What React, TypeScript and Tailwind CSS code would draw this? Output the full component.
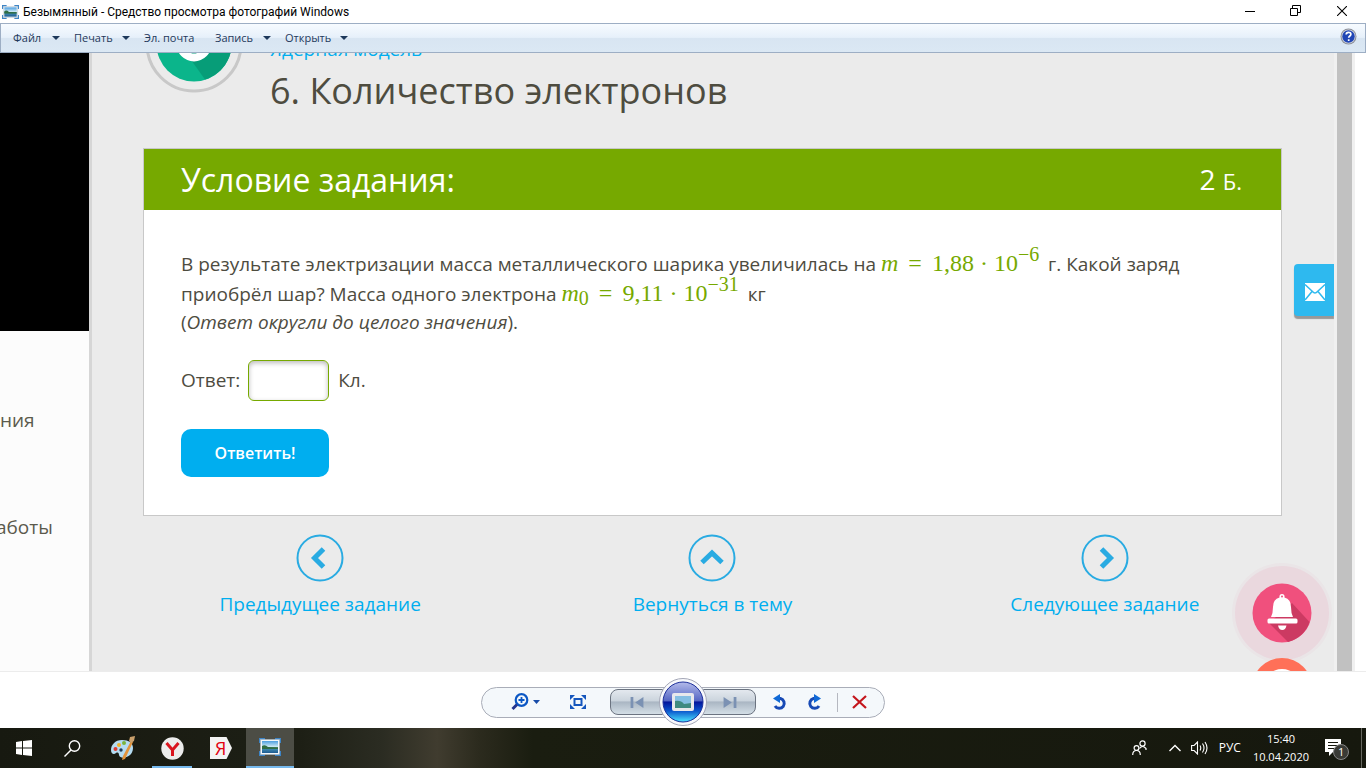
import React, { useState } from "react";

const MENU = [
  { label: "Файл", arrow: true, width: "w-[61px]" },
  { label: "Печать", arrow: true, width: "w-[70px]" },
  { label: "Эл. почта", arrow: false, width: "w-[71px]" },
  { label: "Запись", arrow: true, width: "w-[70px]" },
  { label: "Открыть", arrow: true, width: "w-[77px]" },
];

const NAV = [
  { label: "Предыдущее задание", d: "M27.5 15 L18.5 24 L27.5 33" },
  { label: "Вернуться в тему", d: "M14 28.5 L24 19 L34 28.5" },
  { label: "Следующее задание", d: "M20.5 15 L29.5 24 L20.5 33" },
];

function PhotoIcon({ className }: { className: string }) {
  return (
    <svg className={className} viewBox="0 0 22 20" aria-hidden="true">
      <defs>
        <linearGradient id="sky" x1="0" y1="0" x2="0" y2="1">
          <stop offset="0" stopColor="#4d9fe0" />
          <stop offset="0.5" stopColor="#d3ecf5" />
          <stop offset="0.55" stopColor="#3d7a5c" />
          <stop offset="0.7" stopColor="#3a83ac" />
          <stop offset="1" stopColor="#1d5b92" />
        </linearGradient>
      </defs>
      <path d="M0 1h6v5H0zM16 1h6v5h-6zM0 14h6v5H0zM16 14h6v5h-6z" fill="#3c84c6" />
      <rect x="1.5" y="2.5" width="19" height="15" fill="#f4f7f9" stroke="#a9b8c4" strokeWidth="0.6" />
      <rect x="3" y="4" width="16" height="12" fill="url(#sky)" />
      <path d="M3 9q3-2 6 1l10 .5v1.500H3z" fill="#2f6d45" />
    </svg>
  );
}

function TitleBar() {
  return (
    <header className="flex h-[23px] shrink-0 items-center bg-white pl-[2px]">
      <PhotoIcon className="h-4 w-[17px]" />
      <h1 className="ml-1 flex-1 font-['Roboto','Open_Sans',sans-serif] text-xs leading-[22px] text-black">
        Безымянный - Средство просмотра фотографий Windows
      </h1>
      <button type="button" aria-label="Свернуть" className="flex h-full w-[46px] items-center justify-center">
        <svg width="10" height="10" viewBox="0 0 10 10"><path d="M0 4.500h10" stroke="#000" /></svg>
      </button>
      <button type="button" aria-label="Восстановить" className="flex h-full w-11 items-center justify-center pb-[2px]">
        <svg width="11" height="11" viewBox="0 0 11 11" fill="none" stroke="#000">
          <path d="M.5 3.500h7v7h-7zM2.500 3V.5h8v7H8" />
        </svg>
      </button>
      <button type="button" aria-label="Закрыть" className="flex h-full w-[49px] items-center justify-center pb-[2px]">
        <svg width="10" height="10" viewBox="0 0 10 10"><path d="M0 0l10 10M10 0L0 10" stroke="#000" strokeWidth="1.100" /></svg>
      </button>
    </header>
  );
}

function MenuBar() {
  return (
    <nav className="flex h-[30px] shrink-0 items-center border border-[#9daec4] bg-[linear-gradient(#f7fbff_0%,#e6f0fa_48%,#d8e5f2_50%,#dbe8f4_100%)] pl-3 text-[11px] text-[#1e395b]">
      {MENU.map((m) => (
        <button
          key={m.label}
          type="button"
          className={`flex shrink-0 items-center justify-between whitespace-nowrap pr-[14px] ${m.width}`}
        >
          {m.label}
          {m.arrow && (
            <svg className="w-2 shrink-0" height="4" viewBox="0 0 8 4"><path d="M0 0h8L4 4z" fill="#1e395b" /></svg>
          )}
        </button>
      ))}
      <button type="button" aria-label="Справка" className="mb-1 ml-auto mr-2">
        <svg width="17" height="17" viewBox="0 0 17 17">
          <circle cx="8.500" cy="8.500" r="8" fill="#8c8f98" />
          <circle cx="8.500" cy="8.500" r="7" fill="#d5d8e2" />
          <circle cx="8.500" cy="8.500" r="6.200" fill="#2146b5" />
          <path d="M6.200 6.600c0-3 4.700-3 4.700-.3 0 1.700-2.200 1.700-2.200 3.500M8.700 11.300v1.700" fill="none" stroke="#fff" strokeWidth="1.700" />
        </svg>
      </button>
    </nav>
  );
}

function TopicBadge() {
  return (
    <svg className="h-[98px] w-[98px] shrink-0" viewBox="0 0 98 98" aria-hidden="true">
      <circle cx="49" cy="49" r="47" fill="none" stroke="#c8c8c8" strokeWidth="3" />
      <circle cx="49" cy="49" r="37.500" fill="#0bb58b" />
      <path d="M44 62L60 84.500A37.500 37.500 0 0 0 86 56L62 36z" fill="#079d78" />
      <circle cx="49" cy="49" r="13.500" fill="none" stroke="#fff" strokeWidth="8" />
    </svg>
  );
}

function Formula({ children }: { children: React.ReactNode }) {
  return (
    <span className="mr-1 whitespace-nowrap font-['Liberation_Serif',serif] text-2xl leading-none text-[#76a900]">
      {children}
    </span>
  );
}

function Sup({ children }: { children: string }) {
  return <span className="relative -top-[10px] text-xl leading-none">{children}</span>;
}

const Eq = () => <span className="mx-[10px]">=</span>;
const Dot = () => <span className="mx-[6px]">·</span>;

function TaskCard() {
  const [answer, setAnswer] = useState("");

  return (
    <section className="border border-[#c8c8c8] bg-white">
      <div className="flex h-[61px] items-center justify-between bg-[#76a900] pl-[37px] pr-[39px] text-white">
        <h3 className="text-[32px] leading-[60px]">Условие задания:</h3>
        <span className="text-[28px] leading-[58px]">2 <span className="text-[22px]">Б.</span></span>
      </div>
      <form
        className="px-[37px] pb-[38px] pt-[39px] text-[19px] text-[#4e4c3f]"
        onSubmit={(e) => e.preventDefault()}
      >
        <p className="leading-[30px]">
          В результате электризации масса металлического шарика увеличилась на{" "}
          <Formula><i>m</i><Eq />1,88<Dot />10<Sup>−6</Sup></Formula> г. Какой заряд
          приобрёл шар? Масса одного электрона{" "}
          <Formula>
            <i>m</i><span className="relative top-1 text-xl leading-none">0</span><Eq />9,11<Dot />10<Sup>−31</Sup>
          </Formula>{" "}
          кг
        </p>
        <p className="leading-[26px]">(<i>Ответ округли до целого значения</i>).</p>
        <div className="mt-[25px] flex items-center">
          <label htmlFor="answer">Ответ:</label>
          <input
            id="answer"
            value={answer}
            onChange={(e) => setAnswer(e.target.value)}
            className="ml-2 mr-[9px] h-[41px] w-[81px] rounded-md border border-[#76a900] bg-white px-2 shadow-[inset_0_2px_5px_#bbb] outline-none"
          />
          <span>Кл.</span>
        </div>
        <button type="submit" className="mt-7 h-12 w-[148px] rounded-[10px] bg-[#00aeef] text-base font-semibold text-white">
          Ответить!
        </button>
      </form>
    </section>
  );
}

function TaskPage() {
  return (
    <main className="relative flex min-w-0 flex-1 flex-col overflow-hidden bg-[#ebebeb] pl-[51px] pr-[52px]">
      {/* the page is scrolled, so its heading starts above the visible area */}
      <div className="-mt-[58px] flex gap-[27px] pl-[2px]">
        <TopicBadge />
        <div className="pt-[41px] text-[#4e4c3f]">
          <a href="#topic" className="block text-[19px] leading-[26px] text-[#00aeef]">Ядерная модель</a>
          <h2 className="pt-[5px] text-[36px] leading-[48px]">6. Количество электронов</h2>
        </div>
      </div>
      <div className="mt-[33px]"><TaskCard /></div>
      <nav className="-mx-[19px] mt-[18px] grid grid-cols-3">
        {NAV.map((n) => (
          <a key={n.label} href="#task" className="flex flex-col items-center text-[19px] text-[#00aeef]">
            <svg width="48" height="48" viewBox="0 0 48 48" fill="none" stroke="#29abe2">
              <circle cx="24" cy="24" r="22.500" strokeWidth="2" />
              <path d={n.d} strokeWidth="5" />
            </svg>
            <span className="mt-2 leading-7">{n.label}</span>
          </a>
        ))}
      </nav>

      {/* floating buttons over the page */}
      <button
        type="button"
        aria-label="Написать"
        className="absolute right-0 top-[211px] flex h-[52px] w-10 items-center justify-center rounded-l bg-[#2eb9ef] pl-[2px] pt-1 shadow-[0_3px_1px_#999]"
      >
        <svg width="20" height="18" viewBox="0 0 20 18">
          <path d="M0 0h20v18H0z" fill="#fff" />
          <path d="M0 1.500l7.500 7Q10 11.500 12.500 8.500L20 1.500M0 17l7-8.500M20 17l-7-8.500" fill="none" stroke="#2eb9ef" strokeWidth="1.500" />
        </svg>
      </button>
      <button type="button" aria-label="Уведомления" className="absolute bottom-0 right-[2px] h-[108px]">
        <svg width="100" height="108" viewBox="0 0 100 108">
          <circle cx="50" cy="50" r="50" fill="#ec407a" opacity=".03" />
          <circle cx="50" cy="50" r="47" fill="#ec407a" opacity=".08" />
          <circle cx="50" cy="125" r="30" fill="#ff7058" />
          <circle cx="50" cy="125" r="19" fill="#fff" />
          <circle cx="50" cy="50" r="29.500" fill="#f0507d" />
          <path d="M60 40L77.500 59A29.500 29.500 0 0 1 56 79L37 60z" fill="#cc3a62" />
          <path d="M39 54Q41 50 41 44 41 36 47.500 34.500 47 31 50 31T52.500 34.500Q59 36 59 44 59 50 61 54z" fill="#fff" />
          <rect x="35.500" y="55.500" width="30" height="5" rx="1.500" fill="#fff" />
          <path d="M46 62.500h8.500q-1 4.500-4.200 4.500T46 62.500z" fill="#fff" />
          <circle cx="50" cy="33.500" r="1" fill="#f0507d" />
        </svg>
      </button>
    </main>
  );
}

function Viewer() {
  return (
    <div className="flex min-h-0 flex-1 overflow-hidden pr-[11px]">
      <aside className="w-[92px] shrink-0 overflow-hidden border-r-[3px] border-[#d6d6d6] bg-[#fcfcfc] text-[19px] text-[#5b5a4c]">
        <div className="h-[278px] bg-black" />
        <p className="mt-[75px] leading-7">ния</p>
        <p className="-ml-1 mt-[79px] leading-7">аботы</p>
      </aside>
      <TaskPage />
      <div className="w-[21px] shrink-0 border-x-[3px] border-[#f0f0f0] bg-[#c1c1c1]" />
    </div>
  );
}

function Controls() {
  return (
    <footer className="flex h-[57px] shrink-0 items-center justify-center border-t border-[#ececec] bg-white pt-1">
      <div className="flex h-[31px] w-[404px] items-center rounded-full border border-[#a9adb8] bg-[#f4f8fb] pl-[29px]">
        <button type="button" aria-label="Масштаб" className="flex w-[30px] items-center gap-1">
          <svg width="18" height="18" viewBox="0 0 18 18" fill="none" stroke="#0b57c4">
            <circle cx="10.500" cy="7" r="5.800" strokeWidth="2.200" />
            <path d="M7.500 7h6M10.500 4v6" strokeWidth="1.800" />
            <path d="M6 11.500L1.500 16" stroke="#23348f" strokeWidth="3" />
          </svg>
          <svg width="7" height="4" viewBox="0 0 7 4"><path d="M0 0h7L3.500 4z" fill="#174ba8" /></svg>
        </button>
        <button type="button" aria-label="По размеру окна" className="ml-[29px]">
          <svg width="16" height="14" viewBox="0 0 16 14">
            <path d="M0 0h5L0 5zM16 0h-5l5 5zM0 14h5L0 9zM16 14h-5l5-5z" fill="#1556bd" />
            <rect x="4.500" y="4" width="7" height="6" fill="none" stroke="#1556bd" strokeWidth="2" />
          </svg>
        </button>
        <div className="ml-6 flex items-center">
          <button type="button" aria-label="Назад" className="flex h-[26px] w-[53px] items-center justify-center rounded-l-lg border border-[#6b7380] bg-[linear-gradient(#e3e8ee_0%,#cbd4dd_45%,#aab6c3_50%,#d3dee6_100%)]">
            <svg width="14" height="11" viewBox="0 0 14 12"><path d="M0 0h3v12H0zM14 0v12L5 6z" fill="#7b91b3" /></svg>
          </button>
          <button type="button" aria-label="Показ слайдов" className="relative -mx-1 h-12 w-12">
            <svg width="48" height="48" viewBox="0 0 48 48">
              <defs>
                <linearGradient id="orb" x1="0" y1="0" x2="0" y2="1">
                  <stop offset="0" stopColor="#b4bbea" />
                  <stop offset="0.470" stopColor="#5566c4" />
                  <stop offset="0.500" stopColor="#04159c" />
                  <stop offset="0.720" stopColor="#0a55cc" />
                  <stop offset="1" stopColor="#4ce6ff" />
                </linearGradient>
              </defs>
              <circle cx="24" cy="24" r="23.500" fill="#f8f9fc" stroke="#a3a6b6" />
              <circle cx="24" cy="24" r="20" fill="url(#orb)" stroke="#1d2f9b" />
              <rect x="13" y="15" width="22" height="18" rx="2" fill="#e8e8ec" />
              <rect x="16" y="18" width="16" height="12" fill="#86bfe3" />
              <path d="M16 23q6-1 9 3l7-1v5H16z" fill="#3f8a80" />
            </svg>
          </button>
          <button type="button" aria-label="Вперёд" className="flex h-[26px] w-[53px] items-center justify-center rounded-r-lg border border-[#6b7380] bg-[linear-gradient(#e3e8ee_0%,#cbd4dd_45%,#aab6c3_50%,#d3dee6_100%)]">
            <svg width="14" height="11" viewBox="0 0 14 12"><path d="M11 0h3v12h-3zM0 0v12l9-6z" fill="#7b91b3" /></svg>
          </button>
        </div>
        <button type="button" aria-label="Повернуть влево" className="ml-[17px]">
          <svg width="15" height="17" viewBox="0 0 15 17">
            <path d="M5 4.500H7.500a5 5 0 1 1-5.500 7.500" fill="none" stroke="#184ab5" strokeWidth="3" />
            <path d="M0 4.500L7 0v9z" fill="#0f69d6" />
          </svg>
        </button>
        <button type="button" aria-label="Повернуть вправо" className="ml-[18px]">
          <svg width="15" height="17" viewBox="0 0 15 17">
            <path d="M10 4.500H7.500a5 5 0 1 0 5.500 7.500" fill="none" stroke="#184ab5" strokeWidth="3" />
            <path d="M15 4.500L8 0v9z" fill="#0f69d6" />
          </svg>
        </button>
        <span className="ml-4 h-[19px] w-px bg-[#b5b8c0]" />
        <button type="button" aria-label="Удалить" className="ml-[14px]">
          <svg width="15" height="14" viewBox="0 0 15 14"><path d="M1 1l13 12M14 1L1 13" stroke="#c4161c" strokeWidth="2.200" /></svg>
        </button>
      </div>
    </footer>
  );
}

function Taskbar() {
  return (
    <div className="flex h-10 shrink-0 items-stretch bg-[linear-gradient(90deg,#171910_0%,#1d1f15_22%,#2b2c22_28%,#403c2f_32%,#2c2b1e_35%,#1a1d10_39%,#16180e_100%)] text-xs text-white">
      <button type="button" aria-label="Пуск" className="flex w-12 items-center justify-center">
        <svg width="16" height="16" viewBox="0 0 16 16" fill="#fff"><path d="M0 2l6-1v6.500H0zM7 1l9-1v7.500H7zM0 8.500h6V15l-6-1zM7 8.500h9V16l-9-1z" /></svg>
      </button>
      <button type="button" aria-label="Поиск" className="flex w-12 items-center justify-center">
        <svg width="17" height="17" viewBox="0 0 17 17" fill="none" stroke="#fff" strokeWidth="1.400"><circle cx="10.500" cy="6" r="5.200" /><path d="M7 10L.5 16.500" /></svg>
      </button>
      <button type="button" aria-label="Paint" className="flex w-[52px] items-center justify-center pl-[2px]">
        <svg width="24" height="24" viewBox="0 0 24 24">
          <path d="M11 4C4 4 0 9 0 14c0 4 3 5 5 3 2-1 3 0 3 2 1 5 14 3 14-7 0-5-4-8-11-8z" fill="#b5dcf1" />
          <circle cx="4.500" cy="13" r="2" fill="#df3b2f" />
          <circle cx="8" cy="9" r="2" fill="#f1b42d" />
          <circle cx="13" cy="7" r="2" fill="#7ab53c" />
          <circle cx="10" cy="14" r="1.700" fill="#1f3a55" />
          <path d="M20 5l2 1-8 17-3 1 1-4z" fill="#e2943c" />
          <path d="M19 1l5-1-1 5-3 2-2-2z" fill="#c9a06c" />
        </svg>
      </button>
      <button type="button" aria-label="Яндекс.Браузер" className="ml-1 flex w-10 items-center justify-center border-b-2 border-[#76b9ed] pt-[2px]">
        <svg width="23" height="23" viewBox="0 0 23 23"><circle cx="11.500" cy="11.500" r="11.200" fill="#ececec" /><path d="M5.500 6l6 7 6-7M11.500 12v7" fill="none" stroke="#d9141e" strokeWidth="3" /></svg>
      </button>
      <button type="button" aria-label="Яндекс" className="ml-1 flex w-[50px] items-center justify-center">
        <span className="flex h-[22px] w-[22px] items-center bg-[#f3f3f3] pl-[5px] text-lg leading-none text-[#e3000f] [clip-path:polygon(0_0,75%_0,100%_50%,75%_100%,0_100%)]">Я</span>
      </button>
      <button type="button" aria-label="Средство просмотра фотографий" className="flex w-12 items-center justify-center border-b-2 border-[#76b9ed] bg-[#4c4d45]">
        <PhotoIcon className="h-5 w-[22px]" />
      </button>
      <div className="ml-auto flex items-center">
        <button type="button" aria-label="Люди" className="mr-[22px]">
          <svg width="15" height="16" viewBox="0 0 15 16" fill="none" stroke="#fff" strokeWidth="1.200">
            <circle cx="10.500" cy="3.500" r="2.600" /><path d="M7.500 8.500q3-4 6.500 0v1.500" />
            <circle cx="4.500" cy="8" r="2.400" /><path d="M.7 15q0-4.500 3.800-4.500T8.300 15" />
          </svg>
        </button>
        <button type="button" aria-label="Скрытые значки" className="mr-[10px]">
          <svg width="12" height="8" viewBox="0 0 12 8"><path d="M.5 7L6 1.500 11.500 7" fill="none" stroke="#fff" strokeWidth="1.400" /></svg>
        </button>
        <button type="button" aria-label="Громкость" className="mr-[10px]">
          <svg width="18" height="14" viewBox="0 0 18 14" fill="none" stroke="#fff" strokeWidth="1.100">
            <path d="M.6 4.500h2.500L6.500 1v12L3.100 9.500H.6zM9 4.500q1.500 2.500 0 5M11.500 2.500q3 4.500 0 9M14 1q4 6 0 12" />
          </svg>
        </button>
        <button type="button" className="mr-3">РУС</button>
        <button type="button" className="mr-4 text-center text-[11px] leading-[18px]">
          15:40<br />10.04.2020
        </button>
        <button type="button" aria-label="Уведомления" className="relative mr-3 h-6 w-6">
          <svg width="24" height="24" viewBox="0 0 24 24">
            <path d="M0 3h16v13H8l-4 4v-4H0z" fill="#fff" />
            <path d="M3 6.500h10M3 9.500h10M3 12.500h7" stroke="#16180e" />
            <circle cx="16" cy="16" r="7.500" fill="#3a3b36" stroke="#888" />
          </svg>
          <span className="absolute left-[13px] top-[9px] text-[11px] leading-[14px]">1</span>
        </button>
        <span className="mr-1 h-10 w-px bg-[#66675f]" />
      </div>
    </div>
  );
}

export default function App() {
  return (
    <div className="flex h-screen flex-col overflow-hidden bg-white font-['Open_Sans','Noto_Sans',sans-serif]">
      <TitleBar />
      <MenuBar />
      <Viewer />
      <Controls />
      <Taskbar />
    </div>
  );
}
